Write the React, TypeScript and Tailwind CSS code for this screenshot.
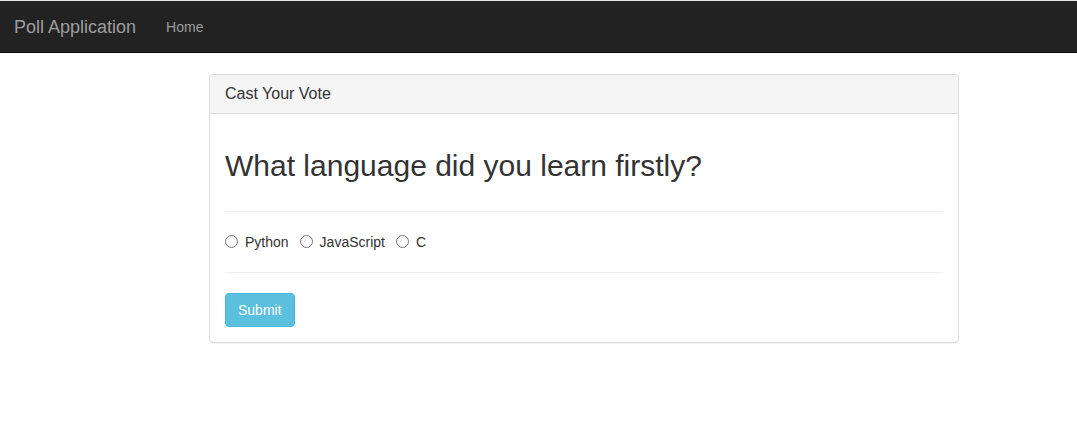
import React from "react";

export default function App() {
  const opts = ["Python", "JavaScript", "C"];
  return (
    <div className="min-h-[425px] bg-white text-[14px] leading-[20px] text-[#333]" style={{ fontFamily: '"Liberation Sans", Arial, sans-serif' }}>
      <div className="h-px bg-[#e5e5e5]" />
      <nav className="flex h-[52px] items-stretch border-b border-[#080808] bg-[#222] pt-px">
        <a className="flex items-center pl-[14px] pr-[15px] text-[18px] leading-[20px] text-[#9d9d9d]">Poll Application</a>
        <a className="flex items-center px-[15px] text-[14px] text-[#9d9d9d]">Home</a>
      </nav>
      <div className="mt-[21px] ml-[209px] w-[750px] rounded-[4px] border border-[#ddd] bg-white shadow-[0_1px_1px_rgba(0,0,0,0.05)]">
        <div className="rounded-t-[3px] border-b border-[#ddd] bg-[#f5f5f5] px-[15px] py-[10px] text-[16px] leading-[17.6px]">
          Cast Your Vote
        </div>
        <div className="p-[15px]">
          <h2 className="mt-[20px] mb-[10px] text-[30px] leading-[33px] font-normal">What language did you learn firstly?</h2>
          <hr className="mt-[29px] mb-[20px] border-t border-[#eee]" />
          <div className="flex items-center">
            {opts.map((o, i) => (
              <label key={o} className={`flex items-center ${i > 0 ? "ml-[11px]" : ""}`}>
                <input type="radio" name="lang" className="m-0 mr-[7px] h-[13px] w-[13px]" />
                <span>{o}</span>
              </label>
            ))}
          </div>
          <hr className="mt-[20px] mb-[20px] border-t border-[#eee]" />
          <button className="h-[34px] rounded-[4px] border border-[#46b8da] bg-[#5bc0de] px-[12px] text-[14px] text-white">Submit</button>
        </div>
      </div>
    </div>
  );
}
